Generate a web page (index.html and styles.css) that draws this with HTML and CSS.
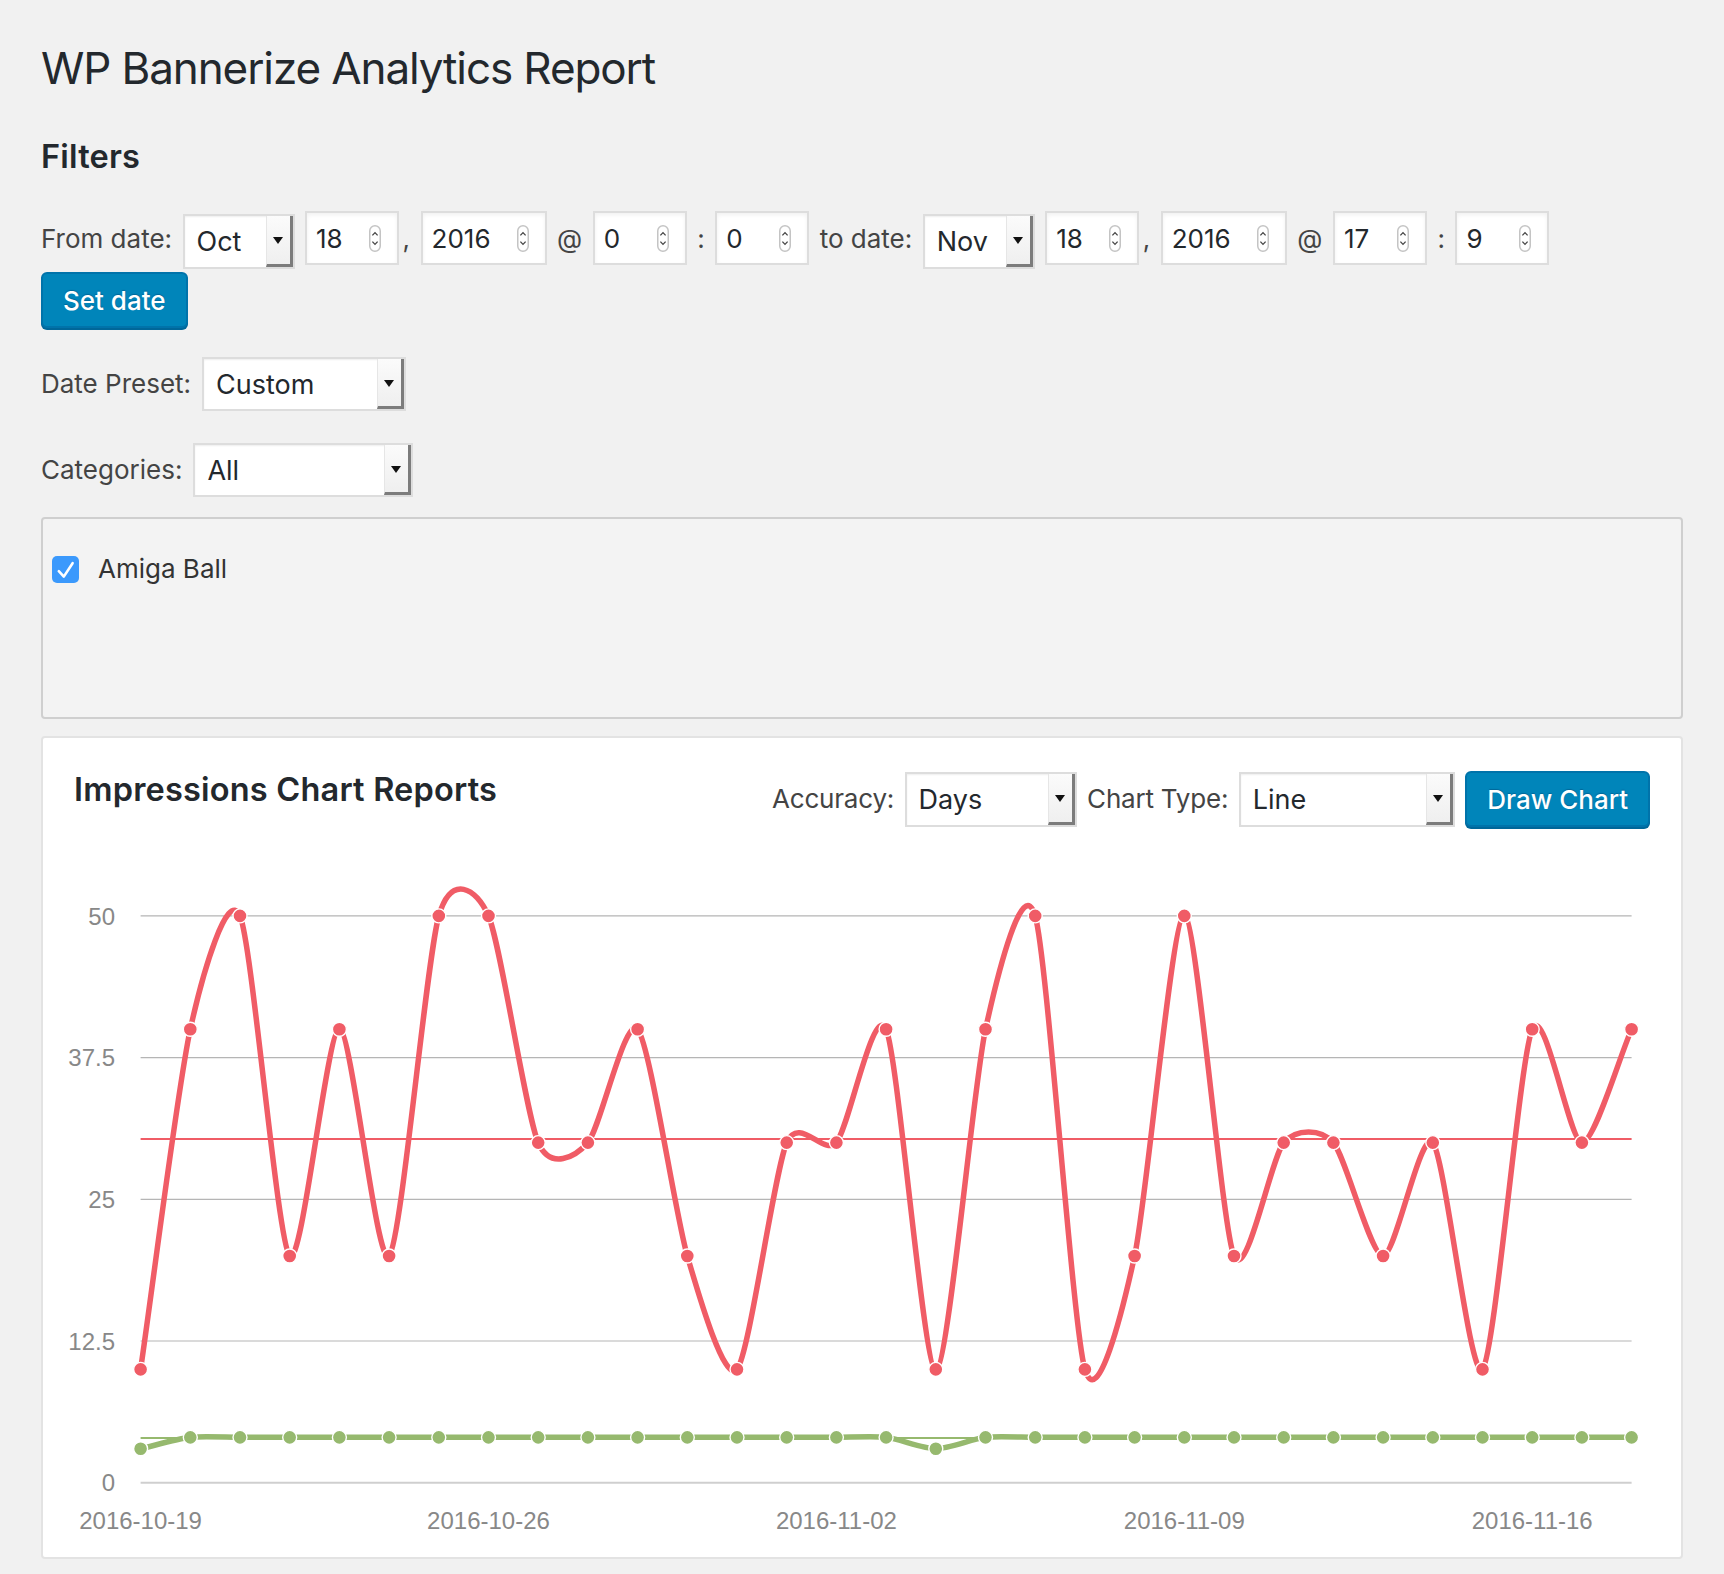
FILE: index.html
```html
<!DOCTYPE html>
<html lang="en">
<head>
<meta charset="utf-8">
<title>WP Bannerize Analytics Report</title>
<link rel="stylesheet" href="styles.css">
</head>
<body>
<div class="wrap">
  <h1 class="page-title">WP Bannerize Analytics Report</h1>
  <h2 class="section-title">Filters</h2>

  <div class="date-row">
    <span class="lbl">From date:</span>
    <div class="sel sel-month"><span class="val">Oct</span><span class="arrow"></span></div>
    <div class="num num-sm"><span class="nv">18</span><svg class="spin" width="12" height="27" viewBox="0 0 12 27"><rect x="0.75" y="0.75" width="10.5" height="25.5" rx="5.25" fill="#fff" stroke="#c4c4c4" stroke-width="1.5"/><path d="M3.4 10.4 6 7.6 8.6 10.4M3.4 16.6 6 19.4 8.6 16.6" fill="none" stroke="#444" stroke-width="1.3"/></svg></div>
    <span class="sep comma">,</span>
    <div class="num num-lg"><span class="nv">2016</span><svg class="spin" width="12" height="27" viewBox="0 0 12 27"><rect x="0.75" y="0.75" width="10.5" height="25.5" rx="5.25" fill="#fff" stroke="#c4c4c4" stroke-width="1.5"/><path d="M3.4 10.4 6 7.6 8.6 10.4M3.4 16.6 6 19.4 8.6 16.6" fill="none" stroke="#444" stroke-width="1.3"/></svg></div>
    <span class="sep">@</span>
    <div class="num num-sm"><span class="nv">0</span><svg class="spin" width="12" height="27" viewBox="0 0 12 27"><rect x="0.75" y="0.75" width="10.5" height="25.5" rx="5.25" fill="#fff" stroke="#c4c4c4" stroke-width="1.5"/><path d="M3.4 10.4 6 7.6 8.6 10.4M3.4 16.6 6 19.4 8.6 16.6" fill="none" stroke="#444" stroke-width="1.3"/></svg></div>
    <span class="sep">:</span>
    <div class="num num-sm"><span class="nv">0</span><svg class="spin" width="12" height="27" viewBox="0 0 12 27"><rect x="0.75" y="0.75" width="10.5" height="25.5" rx="5.25" fill="#fff" stroke="#c4c4c4" stroke-width="1.5"/><path d="M3.4 10.4 6 7.6 8.6 10.4M3.4 16.6 6 19.4 8.6 16.6" fill="none" stroke="#444" stroke-width="1.3"/></svg></div>
    <span class="lbl">to date:</span>
    <div class="sel sel-month"><span class="val">Nov</span><span class="arrow"></span></div>
    <div class="num num-sm"><span class="nv">18</span><svg class="spin" width="12" height="27" viewBox="0 0 12 27"><rect x="0.75" y="0.75" width="10.5" height="25.5" rx="5.25" fill="#fff" stroke="#c4c4c4" stroke-width="1.5"/><path d="M3.4 10.4 6 7.6 8.6 10.4M3.4 16.6 6 19.4 8.6 16.6" fill="none" stroke="#444" stroke-width="1.3"/></svg></div>
    <span class="sep comma">,</span>
    <div class="num num-lg"><span class="nv">2016</span><svg class="spin" width="12" height="27" viewBox="0 0 12 27"><rect x="0.75" y="0.75" width="10.5" height="25.5" rx="5.25" fill="#fff" stroke="#c4c4c4" stroke-width="1.5"/><path d="M3.4 10.4 6 7.6 8.6 10.4M3.4 16.6 6 19.4 8.6 16.6" fill="none" stroke="#444" stroke-width="1.3"/></svg></div>
    <span class="sep">@</span>
    <div class="num num-sm"><span class="nv">17</span><svg class="spin" width="12" height="27" viewBox="0 0 12 27"><rect x="0.75" y="0.75" width="10.5" height="25.5" rx="5.25" fill="#fff" stroke="#c4c4c4" stroke-width="1.5"/><path d="M3.4 10.4 6 7.6 8.6 10.4M3.4 16.6 6 19.4 8.6 16.6" fill="none" stroke="#444" stroke-width="1.3"/></svg></div>
    <span class="sep">:</span>
    <div class="num num-sm"><span class="nv">9</span><svg class="spin" width="12" height="27" viewBox="0 0 12 27"><rect x="0.75" y="0.75" width="10.5" height="25.5" rx="5.25" fill="#fff" stroke="#c4c4c4" stroke-width="1.5"/><path d="M3.4 10.4 6 7.6 8.6 10.4M3.4 16.6 6 19.4 8.6 16.6" fill="none" stroke="#444" stroke-width="1.3"/></svg></div>
  </div>
  <button class="btn btn-set" type="button">Set date</button>

  <div class="field-row row-preset">
    <span class="lbl">Date Preset:</span>
    <div class="sel sel-preset"><span class="val">Custom</span><span class="arrow"></span></div>
  </div>

  <div class="field-row row-cat">
    <span class="lbl">Categories:</span>
    <div class="sel sel-cat"><span class="val">All</span><span class="arrow"></span></div>
  </div>

  <div class="cat-box">
    <label class="cb">
      <svg class="check" width="27" height="27" viewBox="0 0 27 27"><rect x="0" y="0" width="27" height="27" rx="5" fill="#3b99fc"/><path d="M6.8 15.2 11.8 20.6 20.6 7.2" fill="none" stroke="#fff" stroke-width="2.6" stroke-linecap="round" stroke-linejoin="round"/></svg>
      <span class="cb-text">Amiga Ball</span>
    </label>
  </div>

  <div class="panel">
    <div class="panel-head">
      <h2 class="panel-title">Impressions Chart Reports</h2>
      <div class="controls">
        <span class="lbl">Accuracy:</span>
        <div class="sel sel-acc"><span class="val">Days</span><span class="arrow"></span></div>
        <span class="lbl">Chart Type:</span>
        <div class="sel sel-type"><span class="val">Line</span><span class="arrow"></span></div>
        <button class="btn btn-draw" type="button">Draw Chart</button>
      </div>
    </div>
    <div id="chart" class="chart"></div>
  </div>
</div>
<script src="script.js"></script>
</body>
</html>
```

FILE: styles.css
```css
* { box-sizing: border-box; }
html, body { margin: 0; padding: 0; }
body {
  background: #f1f1f1;
  font-family: "Inter", "Liberation Sans", sans-serif;
  color: #444;
}
.wrap { padding: 40px 41px 15px 41px; }

.page-title {
  margin: 0;
  font-size: 44px;
  line-height: 56px;
  font-weight: 400;
  letter-spacing: -1.1px;
  color: #23282d;
}
.section-title {
  margin: 41px 0 0;
  font-size: 32.5px;
  line-height: 40px;
  font-weight: 600;
  letter-spacing: 0.2px;
  color: #23282d;
}

.lbl {
  font-size: 26px;
  line-height: 56px;
  color: #444;
  white-space: nowrap;
}
.controls .lbl { letter-spacing: -0.2px; }
.sep {
  font-size: 26px;
  line-height: 56px;
  color: #444;
}
.comma { margin-left: -7px; }

.date-row {
  display: flex;
  align-items: flex-start;
  gap: 10.5px;
  margin-top: 34px;
  height: 58px;
}
.date-row .sel { margin-top: 3px; }

/* select look-alike */
.sel {
  display: flex;
  height: 55px;
  border: 2px solid #ddd;
  background: #fff;
  box-shadow: inset 0 1px 2px rgba(0,0,0,.07);
}
.sel .val {
  flex: 1;
  padding-left: 12px;
  font-size: 27px;
  line-height: 51px;
  color: #23282d;
  white-space: nowrap;
}
.sel .arrow {
  position: relative;
  width: 27px;
  background: linear-gradient(#fbfbfb, #efefef);
  border-left: 1px solid #e6e6e6;
  border-right: 3px solid #7c7c7c;
  border-bottom: 3px solid #7c7c7c;
}
.sel .arrow::after {
  content: "";
  position: absolute;
  left: 6px;
  top: 50%;
  margin-top: -3px;
  border-left: 5px solid transparent;
  border-right: 5px solid transparent;
  border-top: 7px solid #111;
}
.sel-month { width: 112px; }
.sel-preset { width: 204px; height: 54px; }
.sel-cat { width: 220px; height: 54px; }
.sel-acc { width: 172px; }
.sel-type { width: 216px; }

/* number input look-alike */
.num {
  display: flex;
  align-items: center;
  height: 54px;
  border: 2px solid #ddd;
  background: #fff;
  box-shadow: inset 0 2px 4px rgba(0,0,0,.06);
  padding-left: 9px;
  padding-right: 16px;
}
.num .nv {
  flex: 1;
  font-size: 26px;
  color: #23282d;
}
.num .spin { display: block; flex: none; }
.num-sm { width: 94px; }
.num-lg { width: 126px; }

/* buttons */
.btn {
  display: block;
  height: 56px;
  padding: 0 20px;
  border: 2px solid #0073aa;
  border-radius: 6px;
  background: #0085ba;
  box-shadow: 0 2px 0 #006799;
  color: #fff;
  font-family: "Inter", "Liberation Sans", sans-serif;
  font-size: 26px;
  font-weight: 500;
  text-shadow: 0 -1px 1px #006799;
  white-space: nowrap;
}
.btn-set { margin-top: 3px; }

.field-row {
  display: flex;
  align-items: center;
  gap: 11px;
  height: 54px;
}
.row-preset { margin-top: 29px; }
.row-cat { margin-top: 32px; }

.cat-box {
  margin-top: 20px;
  height: 202px;
  border: 2px solid #cfcfcf;
  border-radius: 4px;
  background: #f3f3f3;
  padding: 33px 9px;
}
.cb {
  display: flex;
  align-items: center;
  gap: 19px;
}
.cb .check { display: block; flex: none; }
.cb-text {
  font-size: 26px;
  line-height: 34px;
  color: #333;
}

/* chart panel */
.panel {
  margin-top: 17px;
  border: 2px solid #e3e3e3;
  border-radius: 4px;
  background: #fff;
}
.panel-head {
  display: flex;
  justify-content: space-between;
  align-items: flex-start;
  padding: 32px 31px 0 31px;
  height: 90px;
}
.panel-title {
  margin: 0;
  font-size: 32.5px;
  line-height: 40px;
  font-weight: 600;
  letter-spacing: 0.2px;
  color: #23282d;
}
.controls {
  display: flex;
  align-items: center;
  gap: 10.5px;
  height: 58px;
}
.chart { height: 729px; }
.chart svg { display: block; }
.chart .axis {
  font-family: "Liberation Sans", Arial, sans-serif;
  font-size: 24px;
  fill: #888;
}
```

FILE: script.js
```js
(function () {
  var NS = 'http://www.w3.org/2000/svg';
  var red = [10,40,50,20,40,20,50,50,30,30,40,20,10,30,30,40,10,40,50,10,20,50,20,30,30,20,30,10,40,30,40];
  var green = red.map(function (v, i) { return (i === 0 || i === 16) ? 3 : 4; });
  var labels = { 0: '2016-10-19', 7: '2016-10-26', 14: '2016-11-02', 21: '2016-11-09', 28: '2016-11-16' };
  var W = 1638, H = 729, X0 = 97.6, DX = 49.7, Y0 = 654.7, YS = 11.336;
  var XR = X0 + 30 * DX;
  var RED = '#f05c66', GREEN = '#96b96e';

  var host = document.getElementById('chart');
  var svg = document.createElementNS(NS, 'svg');
  svg.setAttribute('width', W);
  svg.setAttribute('height', H);
  svg.setAttribute('viewBox', '0 0 ' + W + ' ' + H);
  host.appendChild(svg);

  function el(name, attrs, text) {
    var e = document.createElementNS(NS, name);
    for (var k in attrs) e.setAttribute(k, attrs[k]);
    if (text != null) e.textContent = text;
    svg.appendChild(e);
    return e;
  }

  [0, 12.5, 25, 37.5, 50].forEach(function (v) {
    var y = Y0 - v * YS;
    el('line', { x1: X0, x2: XR, y1: y, y2: y, stroke: v === 0 ? '#cfcfcf' : '#b5b5b5', 'stroke-width': v === 0 ? 2 : 1.2 });
    el('text', { x: 72, y: y + 8.6, 'text-anchor': 'end', 'class': 'axis' }, String(v));
  });

  function avg(a) { return a.reduce(function (s, v) { return s + v; }, 0) / a.length; }
  [[red, RED], [green, GREEN]].forEach(function (p) {
    var y = Y0 - avg(p[0]) * YS;
    el('line', { x1: X0, x2: XR, y1: y, y2: y, stroke: p[1], 'stroke-width': 2 });
  });

  Object.keys(labels).forEach(function (i) {
    el('text', { x: X0 + i * DX, y: 701, 'text-anchor': 'middle', 'class': 'axis' }, labels[i]);
  });

  function coords(d) { return d.map(function (v, i) { return { x: X0 + i * DX, y: Y0 - v * YS }; }); }
  function grad(a, b) { return (a.y - b.y) / (a.x - b.x); }
  function pathFor(c) {
    var g = c.map(function (p, i) {
      var prev = c[i - 1], next = c[i + 1];
      if (prev && next) return grad(prev, next);
      if (prev) return grad(prev, p);
      return grad(p, next);
    });
    var d = 'M' + c[0].x + ',' + c[0].y;
    for (var i = 1; i < c.length; i++) {
      var p = c[i - 1], q = c[i];
      var ix = (q.x - p.x) / 4;
      var y1 = Math.min(Y0, p.y + ix * g[i - 1]);
      var y2 = Math.min(Y0, q.y - ix * g[i]);
      d += ' C' + (p.x + ix) + ',' + y1 + ' ' + (q.x - ix) + ',' + y2 + ' ' + q.x + ',' + q.y;
    }
    return d;
  }

  var series = [[green, GREEN], [red, RED]];
  series.forEach(function (s) {
    el('path', { d: pathFor(coords(s[0])), fill: 'none', stroke: s[1], 'stroke-width': 5.5, 'stroke-linejoin': 'round' });
  });
  series.forEach(function (s) {
    coords(s[0]).forEach(function (p) {
      el('circle', { cx: p.x, cy: p.y, r: 7, fill: s[1], stroke: '#fff', 'stroke-width': 1.4 });
    });
  });
})();
```
